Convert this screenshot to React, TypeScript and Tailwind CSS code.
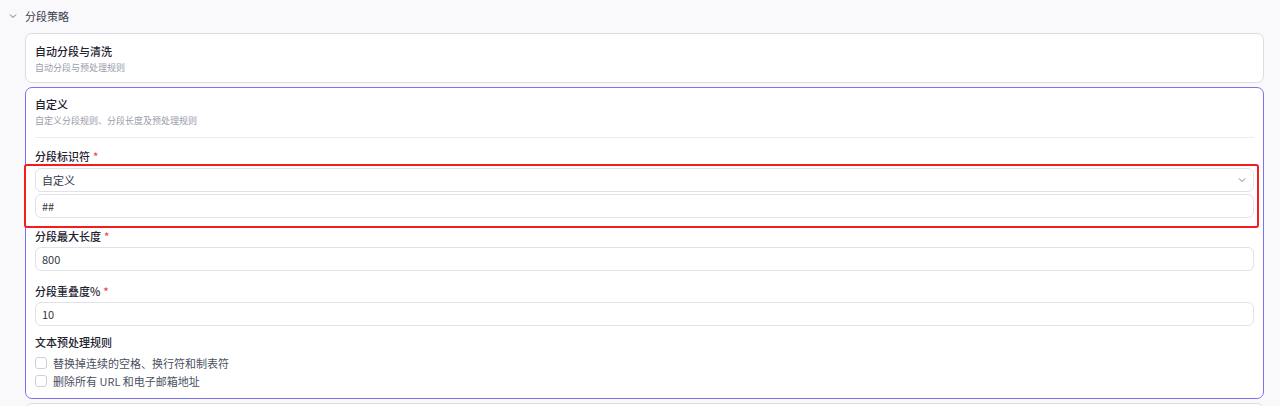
import React from "react";

const font = { fontFamily: '"Noto Sans CJK SC", "Noto Sans", sans-serif' };

function Label({ text }: { text: string }) {
  return (
    <div className="flex items-center h-4 text-[11px] leading-4 font-medium text-[#1f2330]">
      <span>{text}</span>
      <span className="ml-[3px] text-[#ef4444]">*</span>
    </div>
  );
}

function Input({ value }: { value: string }) {
  return (
    <div className="h-6 flex items-center px-[6px] rounded-md border border-[#e1e1ea] bg-white text-[11px] text-[#333847]">
      {value}
    </div>
  );
}

function Checkbox({ text }: { text: string }) {
  return (
    <div className="flex items-center h-[18px] gap-[6px]">
      <div className="w-[12px] h-[12px] rounded-[3px] border border-[#cfcfd9] bg-white" />
      <span className="text-[11px] text-[#4b5060]">{text}</span>
    </div>
  );
}

export default function App() {
  return (
    <div className="w-[1280px] h-[406px] overflow-hidden bg-[#f9f9fc]" style={font}>
      <div className="flex items-center h-8 pl-[8px]">
        <svg width="10" height="10" viewBox="0 0 10 10" className="text-[#6b7080]">
          <path d="M2 3.5 L5 6.5 L8 3.5" fill="none" stroke="currentColor" strokeWidth="1" />
        </svg>
        <span className="ml-[7px] text-[11px] text-[#3a3f4d]">分段策略</span>
      </div>
      <div className="pl-[25px] pr-[16px] pt-[1px] flex flex-col gap-[4px]">
        <div className="rounded-[7px] border border-[#dcdce5] bg-white px-[9px] pt-[9px] pb-[7px]">
          <div className="text-[11px] leading-4 font-medium text-[#1f2330]">自动分段与清洗</div>
          <div className="mt-[2px] text-[9px] leading-[14px] text-[#9a9dab]">自动分段与预处理规则</div>
        </div>
        <div className="rounded-[7px] border border-[#7d71f3] bg-white px-[9px] pt-[8px] pb-[8px]">
          <div className="pb-[9px] border-b border-[#ececf1]">
            <div className="text-[11px] leading-4 font-medium text-[#1f2330]">自定义</div>
            <div className="mt-[2px] text-[9px] leading-[14px] text-[#9a9dab]">自定义分段规则、分段长度及预处理规则</div>
          </div>
          <div className="mt-[10px]">
            <Label text="分段标识符" />
            <div className="relative mt-[4px] flex flex-col gap-[2px]">
              <div className="h-6 flex items-center justify-between px-[6px] rounded-md border border-[#e1e1ea] bg-white text-[11px] text-[#333847]">
                <span>自定义</span>
                <svg width="10" height="10" viewBox="0 0 10 10" className="text-[#7a7f8e]">
                  <path d="M2 3.5 L5 6.5 L8 3.5" fill="none" stroke="currentColor" strokeWidth="1" />
                </svg>
              </div>
              <Input value="##" />
              <div className="absolute -left-[11px] -right-[5px] -top-[4px] -bottom-[10px] rounded-[3px] border-2 border-[#f21d1d] pointer-events-none" />
            </div>
          </div>
          <div className="mt-[10px]">
            <Label text="分段最大长度" />
            <div className="mt-[3px]">
              <Input value="800" />
            </div>
          </div>
          <div className="mt-[12px]">
            <Label text="分段重叠度%" />
            <div className="mt-[3px]">
              <Input value="10" />
            </div>
          </div>
          <div className="mt-[8px]">
            <div className="h-4 text-[11px] leading-4 font-medium text-[#1f2330]">文本预处理规则</div>
            <div className="mt-[4px]">
              <Checkbox text="替换掉连续的空格、换行符和制表符" />
              <Checkbox text="删除所有 URL 和电子邮箱地址" />
            </div>
          </div>
        </div>
        <div className="h-6 rounded-t-[7px] border border-[#dcdce5] bg-white" />
      </div>
    </div>
  );
}
